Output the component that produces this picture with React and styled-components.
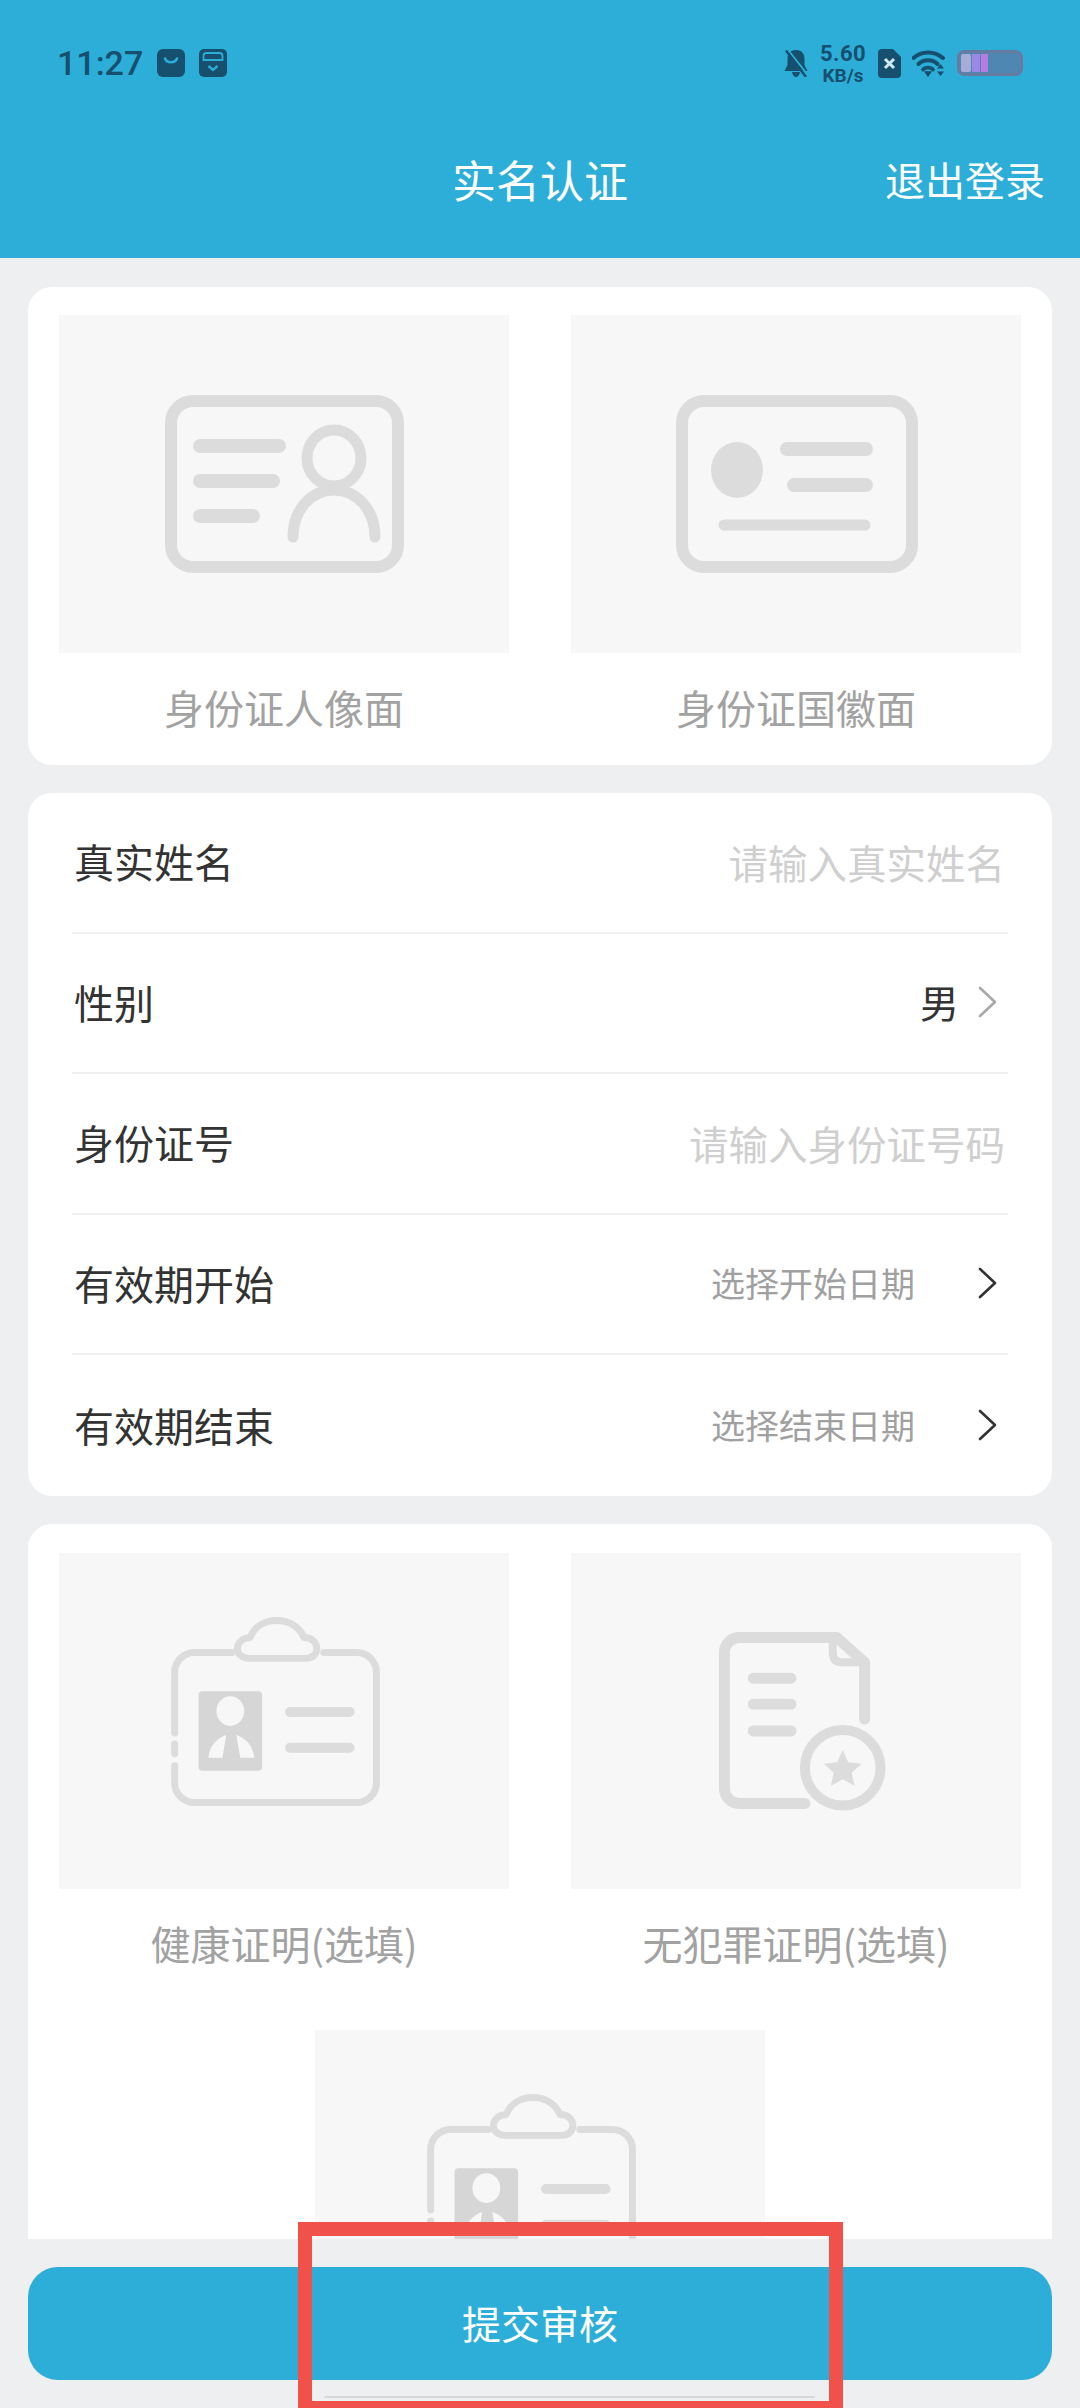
import React from 'react';
import styled, { createGlobalStyle } from 'styled-components';

const BRAND = '#2caed8';
const STATUS = '#174f6e';
const ICON = '#dcdcdc';
const TILE = '#f7f7f7';

const Global = createGlobalStyle`
  html, body { margin: 0; padding: 0; background: #eeeff0; }
  * { box-sizing: border-box; }
  body { font-family: "Noto Sans CJK SC", "Noto Sans", sans-serif; }
`;

const Page = styled.div`
  position: relative;
  width: 1080px;
  height: 2408px;
  display: flex;
  flex-direction: column;
  overflow: hidden;
  background: #eeeff0;
`;

const Header = styled.header`
  flex: none;
  height: 258px;
  background: ${BRAND};
  display: flex;
  flex-direction: column;
`;

const StatusBar = styled.div`
  height: 126px;
  padding: 0 57px;
  display: flex;
  align-items: center;
  justify-content: space-between;
  color: ${STATUS};
`;

const StatusGroup = styled.div`
  display: flex;
  align-items: center;
  gap: ${p => p.$gap}px;
`;

const Time = styled.span`
  font-family: Roboto, sans-serif;
  font-weight: 500;
  font-size: 34px;
  line-height: 1;
`;

const Speed = styled.div`
  width: 44px;
  margin: 2px 2px 0 2px;
  display: flex;
  flex-direction: column;
  align-items: center;
  font-family: Roboto, sans-serif;
  font-weight: 700;
  line-height: 1;
`;

const SpeedValue = styled.span`
  font-size: 22px;
  letter-spacing: 0.5px;
`;

const SpeedUnit = styled.span`
  font-size: 19px;
  margin-top: 1px;
`;

const NavBar = styled.div`
  height: 106px;
  padding: 0 35px;
  display: grid;
  grid-template-columns: 1fr auto 1fr;
  align-items: center;
  color: #fff;
`;

const Title = styled.h1`
  grid-column: 2;
  margin: 0;
  font-size: 44px;
  font-weight: 400;
  line-height: 1;
`;

const Logout = styled.span`
  justify-self: end;
  font-size: 40px;
  line-height: 1;
`;

const Scroll = styled.main`
  flex: none;
  height: 1981px;
  overflow: hidden;
  padding: 29px 28px 0;
  display: flex;
  flex-direction: column;
  gap: 28px;
`;

const Card = styled.section`
  flex: none;
  background: #fff;
  border-radius: 24px;
`;

const TileCard = styled(Card)`
  padding: ${p => p.$top}px 31px 0;
  display: grid;
  grid-template-columns: 450px 450px;
  column-gap: 62px;
  row-gap: 29px;
`;

const Tile = styled.div`
  grid-column: ${p => (p.$center ? '1 / span 2' : 'auto')};
  justify-self: center;
  width: 450px;
`;

const TileImage = styled.div`
  height: ${p => p.$h}px;
  background: ${TILE};
  display: flex;
`;

const TileLabel = styled.div`
  height: 112px;
  display: flex;
  align-items: center;
  justify-content: center;
  padding-bottom: 4px;
  font-size: 40px;
  line-height: 1;
  color: #a2a2a2;
`;

const FormCard = styled(Card)`
  height: 703px;
  padding: 0 44px;
  display: grid;
  grid-auto-rows: 1fr;
`;

const Row = styled.div`
  display: flex;
  align-items: center;
  justify-content: space-between;
  padding: 0 3px 2px 2px;
  border-bottom: ${p => (p.$last ? 'none' : '2px solid #f0f0f0')};
`;

const RowLabel = styled.span`
  font-size: 40px;
  line-height: 1;
  color: #333;
`;

const RowControl = styled.div`
  display: flex;
  align-items: center;
  gap: ${p => p.$gap || 0}px;
  margin-right: ${p => p.$mr || 0}px;
`;

const Placeholder = styled.span`
  font-size: 39.5px;
  line-height: 1;
  color: #cfcfcf;
`;

const Value = styled.span`
  font-size: 39px;
  line-height: 1;
  color: #333;
`;

const Hint = styled.span`
  font-size: 34px;
  line-height: 1;
  color: #a0a0a0;
`;

const Footer = styled.footer`
  flex: none;
  height: 169px;
  padding: 28px 28px;
`;

const SubmitButton = styled.button`
  width: 100%;
  height: 113px;
  border: 0;
  padding: 0 0 2px;
  border-radius: 30px;
  background: ${BRAND};
  color: #fff;
  font-family: inherit;
  font-size: 39px;
  line-height: 1;
`;

const Annotation = styled.div`
  position: absolute;
  left: 298px;
  top: 2222px;
  width: 545px;
  height: 186px;
  border: 14px solid #f0524b;
  border-bottom-width: 7px;
`;

const SheetEdge = styled.div`
  position: absolute;
  left: 12px;
  right: 14px;
  top: 160px;
  height: 2px;
  border-radius: 2px 2px 0 0;
  background: #d8d6d6;
`;

const Art = styled.svg`
  display: block;
  width: 100%;
  height: 100%;
`;

const Chevron = ({ color }) => (
  <svg width="19" height="32" viewBox="0 0 19 32" fill="none" stroke={color} strokeWidth="2.6" strokeLinecap="round" strokeLinejoin="round">
    <path d="M2 2 L17 16 L2 30" />
  </svg>
);

const BagIcon = () => (
  <svg width="28" height="28" viewBox="0 0 28 28">
    <rect width="28" height="28" rx="6" fill={STATUS} />
    <path d="M8 9.5 C10 14.5 18 14.5 20 9.5" fill="none" stroke={BRAND} strokeWidth="2.6" strokeLinecap="round" />
  </svg>
);

const BoxIcon = () => (
  <svg width="28" height="28" viewBox="0 0 28 28">
    <rect width="28" height="28" rx="5" fill={STATUS} />
    <path d="M4.5 11 V7 a3 3 0 0 1 3 -3 H20.5 a3 3 0 0 1 3 3 V11 Z" fill="none" stroke={BRAND} strokeWidth="1.8" />
    <path d="M9.5 17 L14 21 L18.5 17" fill="none" stroke={BRAND} strokeWidth="2.4" />
  </svg>
);

const BellOff = () => (
  <svg width="24" height="28" viewBox="0 0 24 28">
    <path d="M12 1 C6 1 3.500 5 3.500 10 V16 L0.500 22 H23.500 L20.500 16 V10 C20.500 5 18 1 12 1 Z M8 23 C8.500 26.500 10.500 28 12 28 C13.500 28 15.500 26.500 16 23 Z" fill={STATUS} />
    <path d="M4.500 1.500 L23 25" stroke={BRAND} strokeWidth="2" />
    <path d="M2 1.500 L22 28" stroke={STATUS} strokeWidth="2.400" />
  </svg>
);

const SimIcon = () => (
  <svg width="23" height="29" viewBox="0 0 23 29">
    <path d="M4 0 H15 L23 8 V25 a4 4 0 0 1 -4 4 H4 a4 4 0 0 1 -4 -4 V4 a4 4 0 0 1 4 -4 Z" fill={STATUS} />
    <path d="M7 10 L16 19 M16 10 L7 19" stroke="#cfeaf4" strokeWidth="3" />
  </svg>
);

const WifiIcon = () => (
  <svg width="34" height="27" viewBox="0 0 34 27" fill="none" stroke={STATUS} strokeLinecap="round">
    <path d="M1.500 8 C9.500 0.500 22.500 0.500 31 8" strokeWidth="4" />
    <path d="M6.500 14 C11.500 9 20.500 9 25.500 14" strokeWidth="4" />
    <path d="M11 19.500 C14 17 18 17 21 19.500" strokeWidth="3.600" />
    <path d="M13 22 L16 26.500 L19 22 Z" fill={STATUS} strokeWidth="1" />
    <path d="M28.500 14 L32 18.500 H25 Z M28.500 26 L25 21.500 H32 Z" fill={STATUS} stroke="none" />
  </svg>
);

const Battery = () => (
  <svg width="66" height="26" viewBox="0 0 66 26">
    <rect x="1.500" y="1.500" width="63" height="23" rx="6" fill="#4f87b3" stroke="#667aa2" strokeWidth="3" />
    <rect x="4" y="4" width="10" height="18" rx="2" fill="#a7add9" />
    <rect x="15" y="4" width="8" height="18" fill="#9a88e6" />
    <rect x="24" y="4" width="7" height="18" fill="#b87ce0" />
  </svg>
);

const PortraitArt = () => (
  <Art viewBox="0 0 450 338" fill="none" stroke={ICON} strokeLinecap="round">
    <rect x="112" y="86" width="227" height="166" rx="22" strokeWidth="12" />
    <path d="M141 131 H220 M141 166 H214 M141 201 H194" strokeWidth="14" />
    <ellipse cx="275" cy="143" rx="27" ry="28" strokeWidth="11" />
    <path d="M234 222 C234 195 252 175 275 175 C298 175 316 195 316 222" strokeWidth="11" />
  </Art>
);

const EmblemArt = () => (
  <Art viewBox="0 0 450 338" fill="none" stroke={ICON} strokeLinecap="round">
    <rect x="111" y="86" width="230" height="166" rx="22" strokeWidth="12" />
    <ellipse cx="166" cy="155" rx="26" ry="28" fill={ICON} stroke="none" />
    <path d="M216 134 H295 M223 170 H295" strokeWidth="14" />
    <path d="M153 210 H294" strokeWidth="11" />
  </Art>
);

const BadgeArt = () => (
  <Art viewBox="0 0 450 338" fill="none" stroke={ICON} strokeLinecap="round" strokeLinejoin="round">
    <path d="M173 100 H135 a20 20 0 0 0 -20 20 V181 M115 192 V202 M115 214 V231 a20 20 0 0 0 20 20 H298 a20 20 0 0 0 20 -20 V120 a20 20 0 0 0 -20 -20 H265" strokeWidth="7" />
    <path d="M190 106 C174 106 174 86 191 85 C196 72 208 68 218 68 C231 68 241 75 245 85 C262 85 262 106 247 106 Z" strokeWidth="7" />
    <rect x="139" y="139" width="64" height="80" rx="4" fill="#d6d6d6" stroke="none" />
    <ellipse cx="171" cy="159" rx="14" ry="15" fill={TILE} stroke="none" />
    <path d="M149 206 C150 193 158 186 167 183 L163 206 Z M195 206 C194 193 186 186 177 183 L181 206 Z" fill={TILE} stroke="none" />
    <path d="M231 160 H291 M231 196 H291" strokeWidth="10" />
  </Art>
);

const RecordArt = () => (
  <Art viewBox="0 0 450 338" fill="none" stroke={ICON} strokeLinecap="round" strokeLinejoin="round">
    <path d="M234 252 H168 a15 15 0 0 1 -15 -15 V100 a15 15 0 0 1 15 -15 H266 L294 110 V167" strokeWidth="11" />
    <path d="M262 88 V100 Q262 110 272 110 H292" strokeWidth="8" />
    <path d="M182 126 H220 M182 152 H220 M182 179 H220" strokeWidth="11" />
    <circle cx="272" cy="216" r="38" strokeWidth="10" />
    <path d="M272 198 L277.500 210.500 L291 212 L281 221 L284 234.500 L272 227.500 L260 234.500 L263 221 L253 212 L266.500 210.500 Z" fill={ICON} stroke="none" />
  </Art>
);

const rows = [
  { label: '真实姓名', placeholder: '请输入真实姓名' },
  { label: '性别', value: '男' },
  { label: '身份证号', placeholder: '请输入身份证号码' },
  { label: '有效期开始', hint: '选择开始日期' },
  { label: '有效期结束', hint: '选择结束日期' },
];

const FormRow = ({ row, last }) => (
  <Row $last={last}>
    <RowLabel>{row.label}</RowLabel>
    {row.placeholder && <Placeholder>{row.placeholder}</Placeholder>}
    {row.value && (
      <RowControl $gap={19} $mr={8}>
        <Value>{row.value}</Value>
        <Chevron color="#a8a8a8" />
      </RowControl>
    )}
    {row.hint && (
      <RowControl $gap={63} $mr={8}>
        <Hint>{row.hint}</Hint>
        <Chevron color="#333" />
      </RowControl>
    )}
  </Row>
);

export default function App() {
  return (
    <Page>
      <Global />
      <Header>
        <StatusBar>
          <StatusGroup $gap={14}>
            <Time>11:27</Time>
            <BagIcon />
            <BoxIcon />
          </StatusGroup>
          <StatusGroup $gap={11}>
            <BellOff />
            <Speed>
              <SpeedValue>5.60</SpeedValue>
              <SpeedUnit>KB/s</SpeedUnit>
            </Speed>
            <SimIcon />
            <WifiIcon />
            <Battery />
          </StatusGroup>
        </StatusBar>
        <NavBar>
          <Title>实名认证</Title>
          <Logout>退出登录</Logout>
        </NavBar>
      </Header>
      <Scroll>
        <TileCard $top={28}>
          <Tile>
            <TileImage $h={338}><PortraitArt /></TileImage>
            <TileLabel>身份证人像面</TileLabel>
          </Tile>
          <Tile>
            <TileImage $h={338}><EmblemArt /></TileImage>
            <TileLabel>身份证国徽面</TileLabel>
          </Tile>
        </TileCard>
        <FormCard>
          {rows.map((row, i) => (
            <FormRow key={row.label} row={row} last={i === rows.length - 1} />
          ))}
        </FormCard>
        <TileCard $top={29}>
          <Tile>
            <TileImage $h={336}><BadgeArt /></TileImage>
            <TileLabel>健康证明(选填)</TileLabel>
          </Tile>
          <Tile>
            <TileImage $h={336}><RecordArt /></TileImage>
            <TileLabel>无犯罪证明(选填)</TileLabel>
          </Tile>
          <Tile $center>
            <TileImage $h={336}><BadgeArt /></TileImage>
          </Tile>
        </TileCard>
      </Scroll>
      <Footer>
        <SubmitButton>提交审核</SubmitButton>
      </Footer>
      <Annotation>
        <SheetEdge />
      </Annotation>
    </Page>
  );
}
